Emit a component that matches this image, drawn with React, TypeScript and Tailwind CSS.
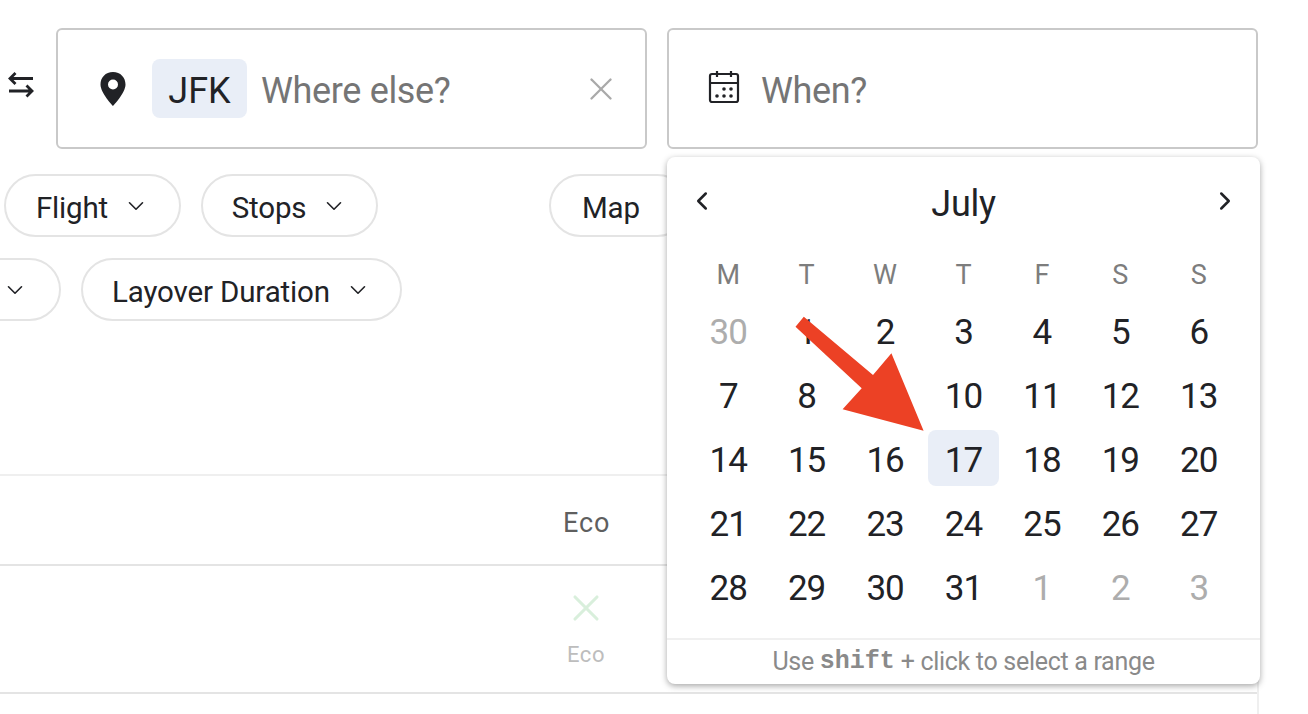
import React from "react";
import { ChevronDown, ChevronLeft, ChevronRight, X } from "lucide-react";

const font = "font-['Roboto',sans-serif]";

function Chip({ label, className = "" }: { label: string; className?: string }) {
  return (
    <div className={`flex h-[63px] shrink-0 items-center justify-center gap-[15px] rounded-full border-2 border-[#e4e4e4] bg-white text-[29.5px] tracking-[-0.15px] text-[#212226] ${className}`}>
      {label && <span className="pt-[6px]">{label}</span>}
      <ChevronDown size={26} strokeWidth={1.5} />
    </div>
  );
}

const weeks: [string, boolean][][] = [
  [["30", true], ["1", false], ["2", false], ["3", false], ["4", false], ["5", false], ["6", false]],
  [["7", false], ["8", false], ["9", false], ["10", false], ["11", false], ["12", false], ["13", false]],
  [["14", false], ["15", false], ["16", false], ["17", false], ["18", false], ["19", false], ["20", false]],
  [["21", false], ["22", false], ["23", false], ["24", false], ["25", false], ["26", false], ["27", false]],
  [["28", false], ["29", false], ["30", false], ["31", false], ["1", true], ["2", true], ["3", true]],
];

export default function App() {
  return (
    <div className={`relative flex h-[714px] w-[1308px] flex-col overflow-hidden bg-white ${font}`}>
      <div className="flex shrink-0 items-start pt-[28px]">
        <div className="flex h-[120px] w-[56px] shrink-0 items-center pl-[7px] pb-[7px]">
          <svg width="27" height="26" viewBox="0 0 27 26" fill="none" stroke="#212226" strokeWidth="2.800">
            <path d="M26 6.500H3M8.500 1 3 6.500 8.500 12" />
            <path d="M2 19h23M19.500 13.500 25 19l-5.500 5.500" />
          </svg>
        </div>
        <div className="flex h-[121px] w-[591px] shrink-0 items-center rounded-[6px] border-2 border-[#c9c9c9] pl-[41px] pr-[25px]">
          <svg width="28" height="36" viewBox="0 0 28 36" className="shrink-0">
            <path fillRule="evenodd" fill="#212226" d="M14 1C6.500 1 1.500 6.500 1.500 13.500 1.500 22 14 35 14 35s12.500-13 12.500-21.500C26.500 6.500 21.500 1 14 1Zm0 17.500a5 5 0 1 1 0-10 5 5 0 0 1 0 10Z" />
          </svg>
          <div className="ml-[25px] flex h-[59px] w-[95px] shrink-0 items-center justify-center rounded-[8px] bg-[#e9eef7] pt-[5px] text-[36px] text-[#212226]">JFK</div>
          <span className="ml-[14px] pt-[5px] text-[36px] tracking-[-0.35px] text-[#757575]">Where else?</span>
          <X className="ml-auto text-[#a9a9a9]" size={38} strokeWidth={1.500} />
        </div>
        <div className="ml-[20px] flex h-[121px] w-[591px] shrink-0 items-center rounded-[6px] border-2 border-[#c9c9c9] pl-[39px]">
          <svg width="32" height="34" viewBox="0 0 32 34" fill="none" stroke="#212226" strokeWidth="2.200" className="mb-[3px] shrink-0">
            <rect x="2" y="4" width="28" height="28" rx="2" />
            <path d="M2 13h28M9 1V7M23 1V7" />
            <g fill="#212226" stroke="none">
              <circle cx="16" cy="19" r="1.800" /><circle cx="23" cy="19" r="1.800" />
              <circle cx="9" cy="26" r="1.800" /><circle cx="16" cy="26" r="1.800" /><circle cx="23" cy="26" r="1.800" />
            </g>
          </svg>
          <span className="ml-[21px] pt-[5px] text-[36px] tracking-[-0.35px] text-[#757575]">When?</span>
        </div>
      </div>

      <div className="mt-[25px] flex shrink-0 gap-[20px] pl-[4px]">
        <Chip label="Flight" className="w-[177px]" />
        <Chip label="Stops" className="w-[177px]" />
        <div className="w-[131px] shrink-0" />
        <div className="flex h-[63px] w-[140px] shrink-0 items-center rounded-full border-2 border-[#e4e4e4] pl-[31px] pt-[6px] text-[29.5px] tracking-[-0.15px] text-[#212226]">Map</div>
      </div>
      <div className="mt-[21px] flex shrink-0 gap-[20px]">
        <Chip label="" className="ml-[-61px] w-[122px] justify-end pr-[31px]" />
        <Chip label="Layover Duration" className="w-[321px]" />
      </div>

      <div className="mt-[153px] flex w-[1259px] flex-1 flex-col border-t-2 border-r-2 border-[#efefef]">
        <div className="flex h-[90px] shrink-0 items-center border-b-2 border-[#e4e4e4] pl-[563px] pt-[6px] text-[27px] tracking-[0.9px] text-[#5f5f5f]">Eco</div>
        <div className="flex h-[128px] shrink-0 flex-col items-center border-b-2 border-[#e4e4e4]">
          <div className="ml-[-85px] flex flex-col items-center pt-[20px]">
            <X size={44} strokeWidth={1.700} className="text-[#d9efdc]" />
            <span className="mt-[8px] text-[22px] tracking-[0.6px] text-[#bdbdbd]">Eco</span>
          </div>
        </div>
      </div>

      <div className="absolute left-[667px] top-[157px] flex h-[527px] w-[593px] flex-col rounded-[8px] bg-white shadow-[0_2px_6px_rgba(0,0,0,0.35)]">
        <div className="relative flex h-[91px] shrink-0 items-center justify-center pt-[2px]">
          <ChevronLeft className="absolute left-[20px] top-[29px] text-[#212226]" size={30} strokeWidth={2} />
          <span className="text-[36px] font-[450] tracking-[-0.3px] text-[#212226]">July</span>
          <ChevronRight className="absolute right-[20px] top-[29px] text-[#212226]" size={30} strokeWidth={2} />
        </div>
        <div className="grid shrink-0 grid-cols-7 px-[22px] text-[27px] text-[#7d7d7d]">
          {["M", "T", "W", "T", "F", "S", "S"].map((d, i) => (
            <div key={i} className="flex h-[54px] items-center justify-center">{d}</div>
          ))}
        </div>
        <div className="grid shrink-0 grid-cols-7 gap-y-[8px] px-[22px]">
          {weeks.flat().map(([d, muted], i) => (
            <div key={i} className={`mx-[4px] flex h-[56px] items-center justify-center rounded-[8px] pt-[6px] text-[35px] tracking-[-1px] ${muted ? "text-[#adadad]" : "text-[#212226]"} ${i === 17 ? "bg-[#e9eef7]" : ""}`}>{d}</div>
          ))}
        </div>
        <div className="mt-auto flex h-[46px] shrink-0 items-center justify-center border-t-2 border-[#f0f0f0] text-[25px] tracking-[-0.3px] text-[#8a8a8a]">
          <span>Use&nbsp;</span><b className="font-['Liberation_Mono',monospace] tracking-normal">shift</b><span>&nbsp;+ click to select a range</span>
        </div>
      </div>

      <svg className="absolute left-0 top-0" width="1308" height="714">
        <polygon fill="#ec4125" points="803.800,316.700 795.500,326.700 861.700,388.300 842.600,409.300 923.600,430.700 891.400,353.300 873,375" />
      </svg>
    </div>
  );
}
